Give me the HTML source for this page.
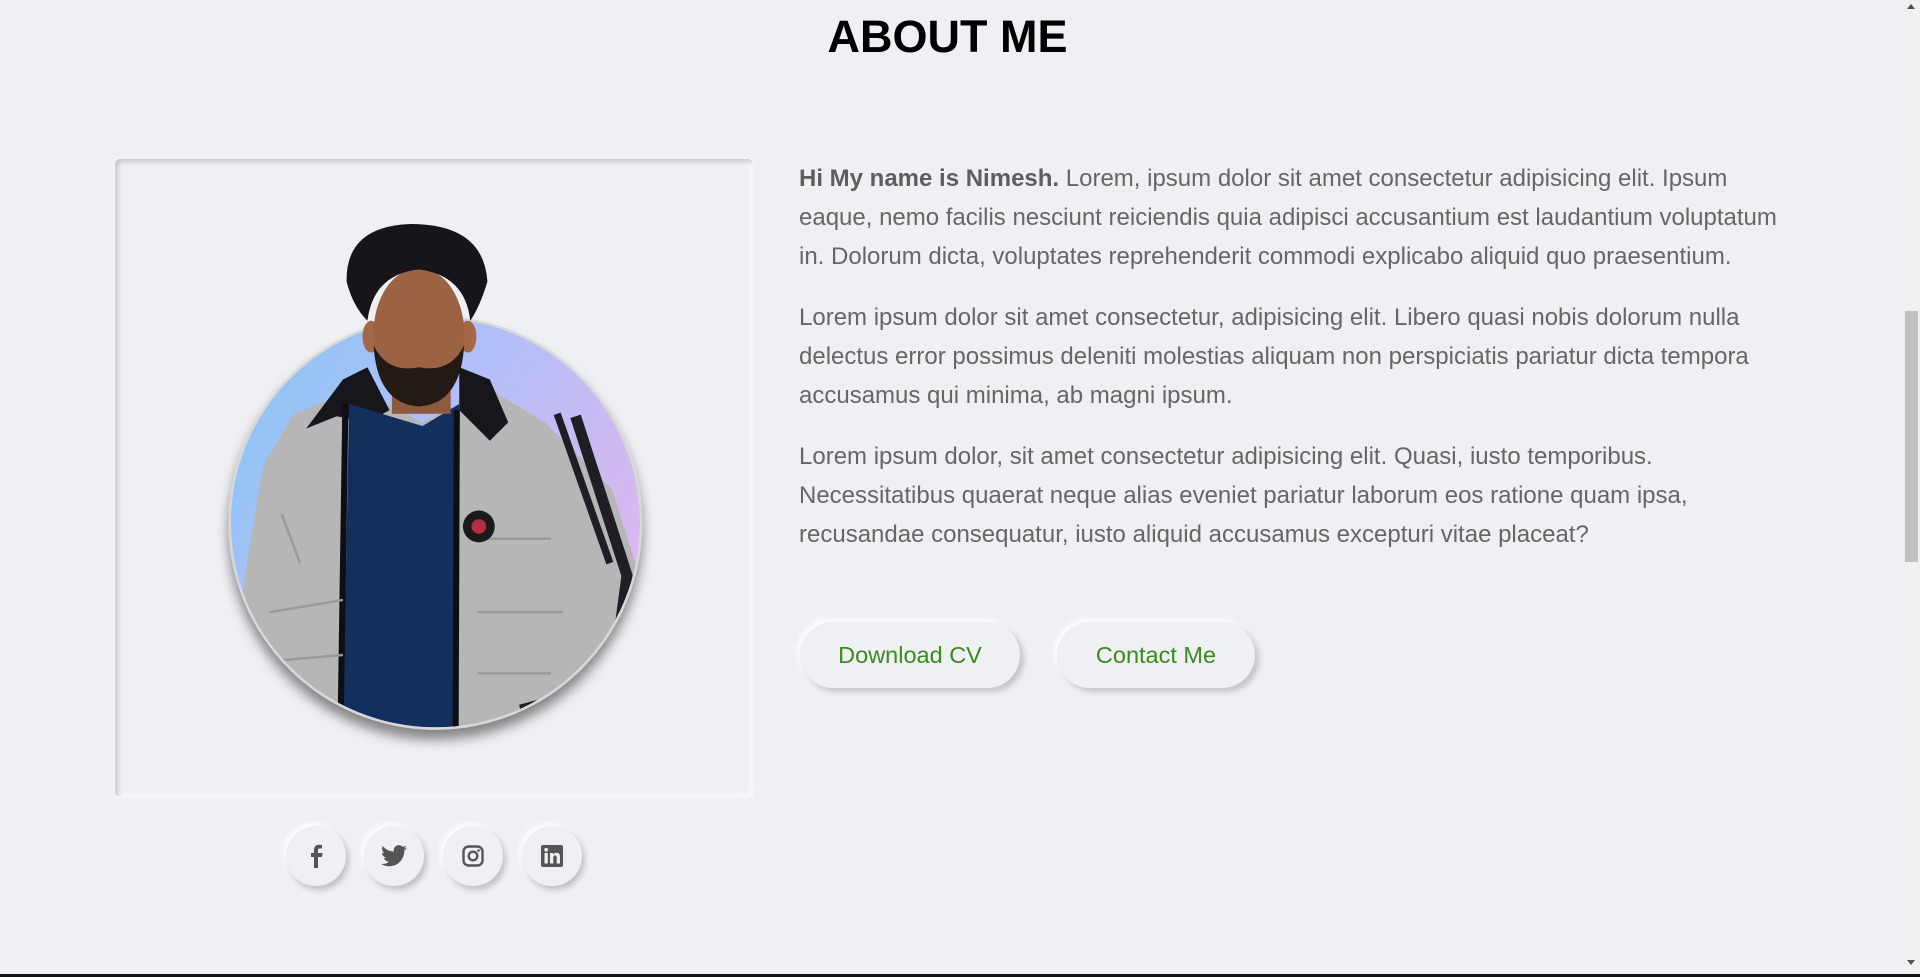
<!DOCTYPE html>
<html><head><meta charset="utf-8"><style>
*{margin:0;padding:0;box-sizing:border-box}
html,body{width:1920px;height:977px;overflow:hidden;background:#eff0f3;font-family:"Liberation Sans",Arial,sans-serif}
h1{position:absolute;top:11px;left:0;width:1895px;text-align:center;font-size:45px;font-weight:bold;color:#000}
.card{position:absolute;left:115px;top:159px;width:638px;height:638px;border-radius:5px;box-shadow:inset 3px 3px 5px #c9cacd,inset -3px -3px 5px #fbfbfd,0 0 3px #fff}
.txt{position:absolute;left:799px;top:159px;width:990px;font-size:24px;line-height:39px;color:#666}
.txt p{margin-bottom:22px}
.txt b{color:#5e5e5e}
.btn{position:absolute;top:622px;height:66px;border-radius:33px;background:#eff0f3;box-shadow:4px 4px 6px #c4c5c8,-3px -3px 6px #fff;color:#3b8a1e;font-size:23.5px;display:flex;align-items:center;justify-content:center}
.soc{position:absolute;top:826px;width:60px;height:60px;border-radius:50%;background:#eff0f3;box-shadow:3px 4px 6px #c1c2c5,-3px -3px 6px #fff;display:flex;align-items:center;justify-content:center}
.sb{position:absolute;right:0;top:0;width:17px;height:977px;background:#f0f0f0}
.thumb{position:absolute;right:2px;top:311px;width:13px;height:251px;background:#c1c1c1}
</style></head><body>
<h1>ABOUT ME</h1>
<div class="card"></div>
<svg style="position:absolute;left:0;top:0" width="1920" height="977" viewBox="0 0 1568 798">
<defs>
<linearGradient id="g" x1="0" y1="0" x2="1" y2="0.6">
<stop offset="0" stop-color="#86c6f1"/><stop offset="0.45" stop-color="#aebffa"/><stop offset="1" stop-color="#dcb8ef"/></linearGradient>
<clipPath id="c"><circle cx="355.5" cy="427" r="167"/><rect x="260" y="150" width="190" height="280"/></clipPath>
<filter id="s" x="-20%" y="-20%" width="140%" height="140%"><feDropShadow dx="0" dy="8" stdDeviation="5" flood-color="#000" flood-opacity="0.45"/></filter>
</defs>
<circle cx="355.5" cy="427" r="169" fill="#d8d8d8" filter="url(#s)"/>
<circle cx="355.5" cy="427" r="167" fill="url(#g)"/>
<g clip-path="url(#c)">
<polygon points="185,600 200,470 215,380 240,338 290,318 345,345 400,318 445,345 500,400 522,470 520,600" fill="#b6b6b6"/>
<path d="M470 340 L512 470 L500 560 L425 580" stroke="#1e1e24" stroke-width="9" fill="none"/>
<path d="M455 338 L498 460" stroke="#1e1e24" stroke-width="6" fill="none"/>
<path d="M250 350 L280 310 L300 300 L318 335 L300 345 L275 340 Z" fill="#16161c"/>
<path d="M375 300 L400 310 L415 345 L400 360 L375 335 Z" fill="#16161c"/>
<polygon points="285,330 345,348 375,330 372,600 280,600" fill="#12305e"/>
<path d="M282 330 L278 600 M373 335 L372 600" stroke="#0e0e14" stroke-width="5"/>
<path d="M230 420 L245 460 M220 500 L280 490 M220 540 L280 535 M390 440 L450 440 M390 500 L460 500 M390 550 L450 550" stroke="#9a9a9a" stroke-width="2"/>
<circle cx="391" cy="430" r="13" fill="#1a1a1a"/><circle cx="391" cy="430" r="6" fill="#b03040"/>
<rect x="320" y="298" width="48" height="40" fill="#8e5a3e"/>
<ellipse cx="303" cy="275" rx="7" ry="13" fill="#a46848"/><ellipse cx="382" cy="275" rx="7" ry="13" fill="#a46848"/>
<ellipse cx="342" cy="272" rx="37" ry="53" fill="#9c6244"/>
<path d="M305 282 Q308 330 342 332 Q376 330 379 282 Q368 305 342 300 Q316 305 305 282Z" fill="#231a16"/>
<path d="M283 230 Q282 185 335 183 Q395 183 398 230 Q392 250 384 262 Q380 225 342 220 Q305 224 300 262 Q288 250 283 230Z" fill="#17151a"/>
</g>
</svg>
<div class="soc" style="left:286px"><svg width="22" height="24" viewBox="0 0 22 24"><path d="M13 24V13h4l.6-4H13V6.5c0-1.2.4-2 2-2h2V1c-.5 0-1.6-.2-3-.2-3 0-5 1.8-5 5.2V9H6v4h3v11z" fill="#555"/></svg></div>
<div class="soc" style="left:364px"><svg width="26" height="22" viewBox="0 0 24 20"><path d="M24 2.4a10 10 0 0 1-2.8.8A5 5 0 0 0 23.3.4a10 10 0 0 1-3.1 1.2A4.9 4.9 0 0 0 11.8 6 14 14 0 0 1 1.7.9a4.9 4.9 0 0 0 1.500 6.6A4.9 4.9 0 0 1 1 6.9a4.9 4.9 0 0 0 3.9 4.9 4.9 4.9 0 0 1-2.2.1 4.9 4.9 0 0 0 4.6 3.4A9.9 9.9 0 0 1 0 17.3 14 14 0 0 0 7.5 19.5c9 0 14-7.5 14-14v-.6A10 10 0 0 0 24 2.4z" fill="#555"/></svg></div>
<div class="soc" style="left:443px"><svg width="22" height="22" viewBox="0 0 22 22"><rect x="1.5" y="1.5" width="19" height="19" rx="5" stroke="#555" stroke-width="2.4" fill="none"/><circle cx="11" cy="11" r="4.3" stroke="#555" stroke-width="2.4" fill="none"/><circle cx="16.5" cy="5.5" r="1.3" fill="#555"/></svg></div>
<div class="soc" style="left:522px"><svg width="22" height="22" viewBox="0 0 22 22"><rect x="0" y="0" width="22" height="22" rx="2" fill="#555"/><rect x="3.5" y="8" width="3.3" height="10.5" fill="#eff0f3"/><circle cx="5.15" cy="4.8" r="1.9" fill="#eff0f3"/><path d="M9 8h3.1v1.5c.6-1 1.8-1.8 3.4-1.8 3 0 3.5 2 3.5 4.5v6.3h-3.3v-5.6c0-1.3-.1-2.5-1.6-2.5s-1.8 1.1-1.8 2.4v5.7H9z" fill="#eff0f3"/></svg></div>
<div class="txt">
<p><b>Hi My name is Nimesh.</b> Lorem, ipsum dolor sit amet consectetur adipisicing elit. Ipsum eaque, nemo facilis nesciunt reiciendis quia adipisci accusantium est laudantium voluptatum in. Dolorum dicta, voluptates reprehenderit commodi explicabo aliquid quo praesentium.</p>
<p>Lorem ipsum dolor sit amet consectetur, adipisicing elit. Libero quasi nobis dolorum nulla delectus error possimus deleniti molestias aliquam non perspiciatis pariatur dicta tempora accusamus qui minima, ab magni ipsum.</p>
<p>Lorem ipsum dolor, sit amet consectetur adipisicing elit. Quasi, iusto temporibus. Necessitatibus quaerat neque alias eveniet pariatur laborum eos ratione quam ipsa, recusandae consequatur, iusto aliquid accusamus excepturi vitae placeat?</p>
</div>
<div class="btn" style="left:800px;width:220px">Download CV</div>
<div class="btn" style="left:1057px;width:198px">Contact Me</div>
<div class="sb"><div class="thumb"></div>
<div style="position:absolute;left:4px;top:4px;width:0;height:0;border-left:4px solid transparent;border-right:4px solid transparent;border-bottom:5px solid #505050"></div>
<div style="position:absolute;left:4px;top:960px;width:0;height:0;border-left:4px solid transparent;border-right:4px solid transparent;border-top:5px solid #505050"></div></div>
<div style="position:absolute;left:0;top:974px;width:1920px;height:3px;background:#111"></div>
</body></html>
